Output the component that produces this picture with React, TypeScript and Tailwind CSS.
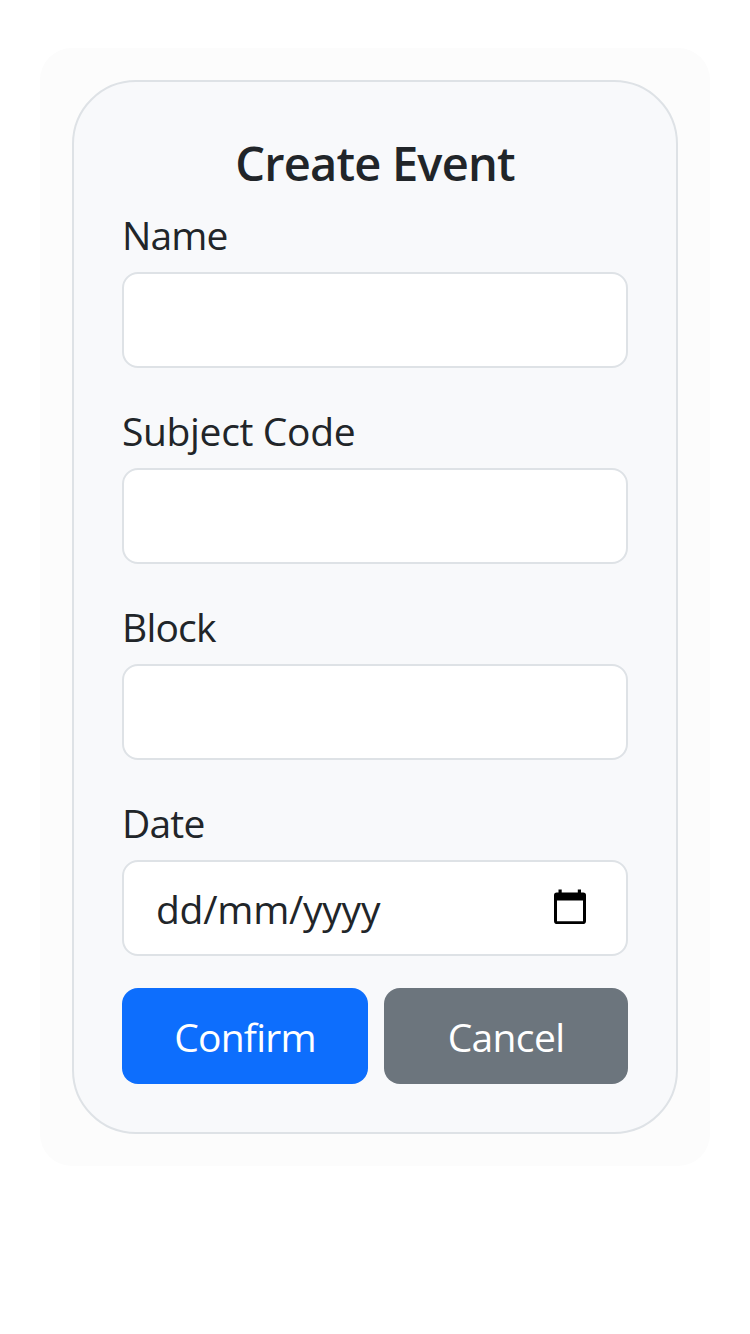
import type { ReactNode } from "react";

const fields = [
  { label: "Name", tracking: "tracking-[-0.85px]" },
  { label: "Subject Code", tracking: "tracking-[-0.35px]" },
  { label: "Block", tracking: "tracking-[-0.8px]" },
];

function Field({ label, tracking, children }: { label: string; tracking: string; children: ReactNode }) {
  return (
    <label className="mb-8 block">
      <span className={`mb-1 block h-[64px] whitespace-nowrap leading-[62px] ${tracking}`}>{label}</span>
      {children}
    </label>
  );
}

function CalendarIcon() {
  return (
    <svg className="mb-1 h-9 w-9" viewBox="0 0 36 36" aria-hidden="true">
      <path
        fillRule="evenodd"
        d="M6.5 1.5h3.2v3h16.1v-3H29v3h2.2A2.8 2.8 0 0 1 34 7.3v26a2.8 2.8 0 0 1-2.8 2.8H4.8A2.8 2.8 0 0 1 2 33.3v-26a2.8 2.8 0 0 1 2.8-2.8h1.7v-3ZM5 12.4v20.8h26V12.4H5Z"
      />
    </svg>
  );
}

export default function App() {
  return (
    <main className="min-h-[1334px] bg-white px-10 pt-12 font-['Open_Sans','Noto_Sans',sans-serif] text-[39px] font-[375] text-[#212529]">
      <section className="rounded-[32px] bg-[#fcfcfc] p-8">
        <form className="h-[1054px] rounded-[64px] border-2 border-[#dee2e6] bg-[#f8f9fb] px-12 pt-[52px]">
          <h1 className="mb-3 text-center text-[47px] leading-[58px] font-[560] tracking-[-0.8px]">Create Event</h1>
          {fields.map((field) => (
            <Field key={field.label} label={field.label} tracking={field.tracking}>
              <input type="text" className="block h-24 w-full rounded-2xl border-2 border-[#dee2e6] bg-white px-8" />
            </Field>
          ))}
          <Field label="Date" tracking="tracking-[-0.8px]">
            <div className="flex h-24 items-center justify-between rounded-2xl border-2 border-[#dee2e6] bg-white pr-[38px] pl-8">
              <span className="pt-[3px] tracking-[-0.25px]">dd/mm/yyyy</span>
              <CalendarIcon />
            </div>
          </Field>
          <div className="grid grid-cols-[246px_244px] gap-4 text-white">
            <button type="button" className="h-24 rounded-2xl bg-[#0d6efd] pt-[3px] tracking-[-0.75px]">Confirm</button>
            <button type="button" className="h-24 rounded-2xl bg-[#6c757d] pt-[3px] tracking-[-0.65px]">Cancel</button>
          </div>
        </form>
      </section>
    </main>
  );
}
